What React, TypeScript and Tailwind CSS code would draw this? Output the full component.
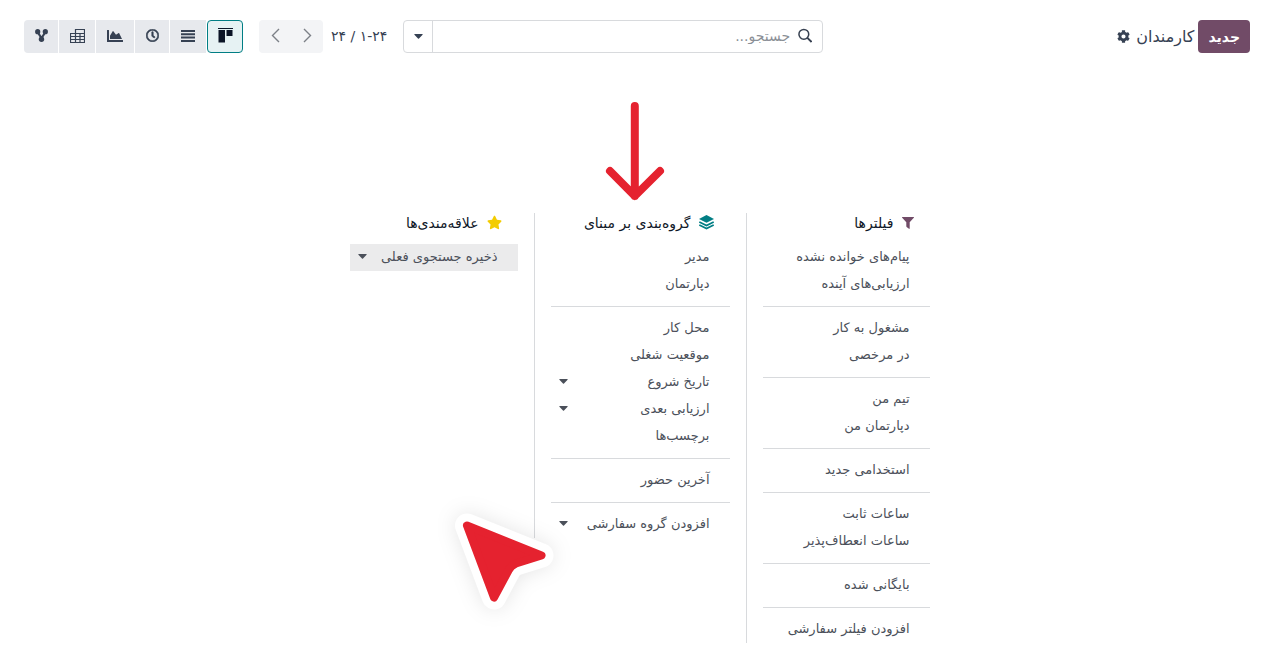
import React from 'react';
import { FaCog, FaStar, FaRegClock, FaChartArea } from 'react-icons/fa';

type Item = { label: string; caret?: boolean };

const filterGroups: Item[][] = [
  [{ label: 'پیام‌های خوانده نشده' }, { label: 'ارزیابی‌های آینده' }],
  [{ label: 'مشغول به کار' }, { label: 'در مرخصی' }],
  [{ label: 'تیم من' }, { label: 'دپارتمان من' }],
  [{ label: 'استخدامی جدید' }],
  [{ label: 'ساعات ثابت' }, { label: 'ساعات انعطاف‌پذیر' }],
  [{ label: 'بایگانی شده' }],
  [{ label: 'افزودن فیلتر سفارشی' }],
];

const groupByGroups: Item[][] = [
  [{ label: 'مدیر' }, { label: 'دپارتمان' }],
  [
    { label: 'محل کار' },
    { label: 'موقعیت شغلی' },
    { label: 'تاریخ شروع', caret: true },
    { label: 'ارزیابی بعدی', caret: true },
    { label: 'برچسب‌ها' },
  ],
  [{ label: 'آخرین حضور' }],
  [{ label: 'افزودن گروه سفارشی', caret: true }],
];

const Caret = () => (
  <svg width="9" height="5" viewBox="0 0 9 5" fill="currentColor" className="shrink-0">
    <path d="M0.8 0h7.4a.5.5 0 0 1 .4.8L5 4.6a.7.7 0 0 1-1 0L.4.8A.5.5 0 0 1 .8 0z" />
  </svg>
);

const KanbanIcon = () => (
  <svg width="15" height="15" viewBox="0 0 15 15" fill="#0b1526">
    <path d="M0 0h15v1H0zM.5 2h6.500v12.500H.5zM8.500 2h6v6h-6z" />
  </svg>
);

const ListIcon = () => (
  <svg width="14" height="12" viewBox="0 0 14 12" fill="currentColor">
    <path d="M0 0h14v2H0zM0 3.300h14v2H0zM0 6.600h14v2H0zM0 9.900h14v2H0z" />
  </svg>
);

const PivotIcon = () => (
  <svg width="15" height="14" viewBox="0 0 15 14" fill="none" stroke="currentColor" strokeWidth="1.200">
    <path d="M5.500.500h9v13H.500v-9h5zM5.500 4.500h9M.500 7.500h14M.500 10.500h14M5.500 4.500v9M10 4.500v9" />
  </svg>
);

const HierarchyIcon = () => (
  <svg width="13" height="13" viewBox="0 0 13 13">
    <path d="M2.500 3l4 6 4-6" fill="none" stroke="currentColor" strokeWidth="2.200" />
    <circle cx="2.700" cy="2.700" r="2.600" fill="currentColor" />
    <circle cx="10.300" cy="2.700" r="2.600" fill="currentColor" />
    <circle cx="6.500" cy="10.200" r="2.700" fill="currentColor" />
  </svg>
);

const FunnelIcon = () => (
  <svg width="12" height="12" viewBox="0 0 12 12" fill="#714b67">
    <path d="M.4 0h11.200c.4 0 .5.500.2.800L7.700 5.300V11.500c0 .4-.4.600-.7.300L4.600 9.900a.8.8 0 0 1-.3-.6v-4L.2.800C-.1.500 0 0 .4 0z" />
  </svg>
);

const LayersIcon = () => (
  <svg width="15" height="15" viewBox="0 0 15 15">
    <path d="M7.500 0L15 3.900 7.500 7.800 0 3.900z" fill="#017e84" />
    <path d="M.3 6.900l7.200 3.700 7.200-3.700M.3 9.900l7.200 3.700 7.200-3.700" fill="none" stroke="#017e84" strokeWidth="1.700" />
  </svg>
);

const SearchIcon = () => (
  <svg width="15" height="15" viewBox="0 0 15 15" fill="none" stroke="#374151" strokeWidth="1.600">
    <circle cx="6.200" cy="6.200" r="5.200" />
    <path d="M10 10l4.400 4.400" strokeWidth="2" />
  </svg>
);

const Chevron = ({ d }: { d: string }) => (
  <svg width="9" height="15" viewBox="0 0 9 15" fill="none" stroke="#7c8087" strokeWidth="1.400">
    <path d={d} />
  </svg>
);

const views = [
  { name: 'کانبان', icon: <KanbanIcon />, width: 'w-9', active: true },
  { name: 'فهرست', icon: <ListIcon />, width: 'w-9' },
  { name: 'فعالیت', icon: <FaRegClock size={13} strokeWidth={24} stroke="currentColor" />, width: 'w-[34px]' },
  { name: 'نمودار', icon: <FaChartArea size={16} />, width: 'w-[38px]' },
  { name: 'محوری', icon: <PivotIcon />, width: 'w-9' },
  { name: 'سلسله مراتب', icon: <HierarchyIcon />, width: 'w-[34px]' },
];

const Heading = ({ icon, children }: { icon: React.ReactNode; children: React.ReactNode }) => (
  <h2 className="mb-3 flex h-[19px] items-center gap-2 px-8 text-sm font-medium whitespace-nowrap text-gray-900">
    {icon}
    {children}
  </h2>
);

const MenuList = ({ groups }: { groups: Item[][] }) => (
  <div className="divide-y divide-[#d8dadd]">
    {groups.map((group, i) => (
      <ul key={i} className="py-2 first:pt-0 last:pb-0">
        {group.map(item => (
          <li key={item.label}>
            <button className="flex h-[27px] w-full items-center justify-between pr-5 pb-0.5 pl-2 whitespace-nowrap">
              {item.label}
              {item.caret && <Caret />}
            </button>
          </li>
        ))}
      </ul>
    ))}
  </div>
);

const ArrowMark = () => (
  <svg className="absolute -top-28 left-[271px]" width="60" height="100" viewBox="0 0 60 100" fill="none" stroke="#e5222f" strokeWidth="8" strokeLinecap="round" strokeLinejoin="round">
    <path d="M29.800 5v90M5 70l24.800 25L55 70" />
  </svg>
);

const PointerMark = () => (
  <svg className="absolute top-[287px] left-[106px] drop-shadow-[0_0_10px_rgba(0,0,0,0.1)]" width="130" height="120" viewBox="0 0 130 120" strokeLinejoin="round">
    <path d="M27 25.500L101.500 55.500 76 63.500Q71 65.500 68.500 70.500L54 97.500z" fill="#fff" stroke="#fff" strokeWidth="24" />
    <path d="M27 25.500L101.500 55.500 76 63.500Q71 65.500 68.500 70.500L54 97.500z" fill="#e5222f" stroke="#e5222f" strokeWidth="8" />
  </svg>
);

const App: React.FC = () => {
  return (
    <div dir="rtl" className="min-h-screen bg-white font-['DejaVu_Sans',sans-serif] text-[13px] text-[#4b505a]">
      <header className="flex items-center pt-5 pr-[19px] pl-6">
        <div className="flex flex-1 items-center gap-1">
          <button className="h-[33px] rounded bg-[#714b67] px-2.5 text-sm font-bold text-white">جدید</button>
          <h1 className="text-base text-gray-700">کارمندان</h1>
          <button aria-label="تنظیمات" className="px-0.5 text-gray-700"><FaCog size={13} /></button>
        </div>

        <div className="flex h-[33px] w-[420px] rounded border border-[#d8dadd]">
          <label className="flex flex-1 items-center gap-2 pr-2.5 pb-0.5">
            <SearchIcon />
            <input type="text" aria-label="جستجو" placeholder="جستجو..." className="w-full bg-transparent text-sm outline-none placeholder:text-[#8b8f96]" />
          </label>
          <button aria-label="گزینه‌های جستجو" className="flex w-[29px] items-center justify-center border-r border-[#d8dadd] text-gray-700"><Caret /></button>
        </div>

        <nav className="mr-4 flex items-center">
          <span className="pb-0.5 text-sm whitespace-nowrap text-gray-700">۱-۲۴ / ۲۴</span>
          <div className="mr-2 flex h-[33px] overflow-hidden rounded bg-[#f3f4f6]">
            <button aria-label="قبلی" className="flex w-8 items-center justify-center pb-0.5"><Chevron d="M1 1l6.500 6.500L1 14" /></button>
            <button aria-label="بعدی" className="flex w-8 items-center justify-center pb-0.5"><Chevron d="M8 1L1.500 7.500 8 14" /></button>
          </div>
          <div className="mr-4 flex gap-px">
            {views.map(v => (
              <button
                key={v.name}
                aria-label={v.name}
                className={`flex h-[33px] ${v.width} items-center justify-center pb-0.5 text-gray-700 last:rounded-l ${v.active ? 'rounded border border-[#017e84] bg-[#e6f2f3]' : 'bg-[#e7e9ed]'}`}
              >
                {v.icon}
              </button>
            ))}
          </div>
        </nav>
      </header>

      <main className="flex justify-center pt-40 pl-2.5">
        <div className="relative flex items-start">
          <section className="w-[200px] border-l border-[#d8dadd]">
            <Heading icon={<FunnelIcon />}>فیلترها</Heading>
            <div className="px-4"><MenuList groups={filterGroups} /></div>
          </section>
          <section className="w-[212px] border-l border-[#d8dadd]">
            <Heading icon={<LayersIcon />}>گروه‌بندی بر مبنای</Heading>
            <div className="px-4"><MenuList groups={groupByGroups} /></div>
          </section>
          <section className="w-[200px]">
            <Heading icon={<FaStar size={15} className="text-[#f3cc00]" />}>علاقه‌مندی‌ها</Heading>
            <div className="px-4">
              <button className="flex h-[27px] w-full items-center justify-between bg-[#ebebec] pr-5 pb-0.5 pl-2 whitespace-nowrap">
                ذخیره جستجوی فعلی
                <Caret />
              </button>
            </div>
          </section>
          <ArrowMark />
          <PointerMark />
        </div>
      </main>
    </div>
  );
};

export default App;
